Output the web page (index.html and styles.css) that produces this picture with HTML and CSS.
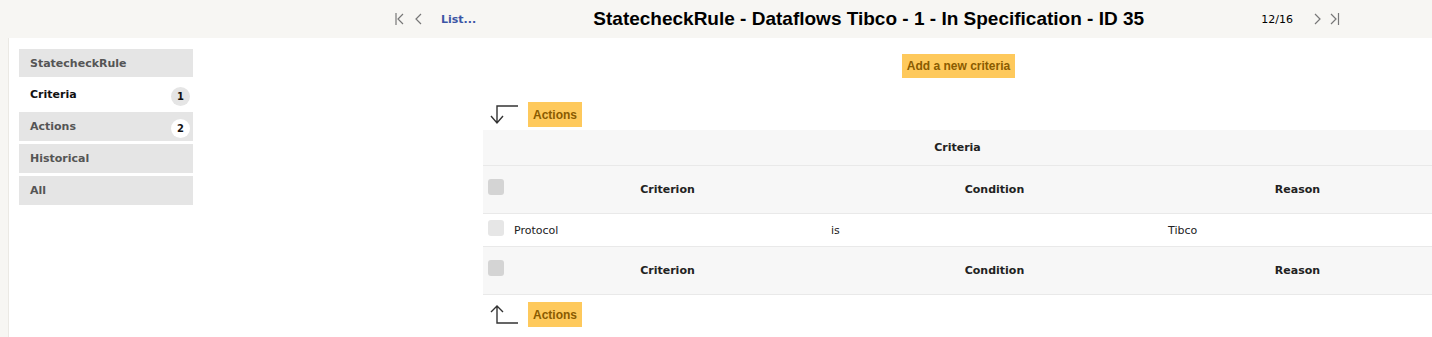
FILE: index.html
```html
<!DOCTYPE html>
<html lang="en">
<head>
    <meta charset="UTF-8">
    <title>StatecheckRule - Dataflows Tibco</title>
    <link rel="stylesheet" href="styles.css">
</head>
<body>

    <div class="topbar">
        <div class="nav-left">
            <svg class="nav-icon" width="12" height="14" viewBox="0 0 12 14"><path d="M2 1v12M9 2L4 7l5 5" fill="none" stroke="#777" stroke-width="1.2"/></svg>
            <svg class="nav-icon" width="10" height="14" viewBox="0 0 10 14"><path d="M7 2L2 7l5 5" fill="none" stroke="#777" stroke-width="1.2"/></svg>
            <a class="list-link" href="#">List...</a>
        </div>
        <h1 class="title">StatecheckRule - Dataflows Tibco - 1 - In Specification - ID 35</h1>
        <div class="nav-right">
            <span class="counter">12/16</span>
            <svg class="nav-icon" width="10" height="14" viewBox="0 0 10 14"><path d="M3 2l5 5-5 5" fill="none" stroke="#777" stroke-width="1.2"/></svg>
            <svg class="nav-icon" width="12" height="14" viewBox="0 0 12 14"><path d="M2 2l5 5-5 5M9.5 1v12" fill="none" stroke="#777" stroke-width="1.2"/></svg>
        </div>
    </div>

    <div class="page">
        <div class="gutter"></div>

        <ul class="sidebar">
            <li class="side-item first">StatecheckRule</li>
            <li class="side-item active">Criteria <span class="badge">1</span></li>
            <li class="side-item">Actions <span class="badge light">2</span></li>
            <li class="side-item">Historical</li>
            <li class="side-item">All</li>
        </ul>

        <div class="main">
            <div class="add-row">
                <button class="yellow-btn add-btn">Add a new criteria</button>
            </div>

            <div class="actions-row">
                <svg class="arrow" width="30" height="20" viewBox="0 0 30 20"><path d="M28 1H7v17M1 11l6 7 6-7" fill="none" stroke="#333" stroke-width="1.4"/></svg>
                <button class="yellow-btn">Actions</button>
            </div>

            <table class="criteria-table">
                <colgroup>
                    <col class="w-check">
                    <col class="w-criterion">
                    <col class="w-condition">
                    <col>
                </colgroup>
                <thead>
                    <tr class="caption-row">
                        <th colspan="4">Criteria</th>
                    </tr>
                    <tr class="head-row">
                        <th><span class="check"></span></th>
                        <th>Criterion</th>
                        <th>Condition</th>
                        <th>Reason</th>
                    </tr>
                </thead>
                <tbody>
                    <tr class="data-row">
                        <td><span class="check light"></span></td>
                        <td>Protocol</td>
                        <td>is</td>
                        <td>Tibco</td>
                    </tr>
                </tbody>
                <tfoot>
                    <tr class="head-row">
                        <th><span class="check"></span></th>
                        <th>Criterion</th>
                        <th>Condition</th>
                        <th>Reason</th>
                    </tr>
                </tfoot>
            </table>

            <div class="actions-row bottom">
                <svg class="arrow" width="30" height="20" viewBox="0 0 30 20"><path d="M28 18H7V1M1 7l6-6 6 6" fill="none" stroke="#333" stroke-width="1.4"/></svg>
                <button class="yellow-btn">Actions</button>
            </div>
        </div>
    </div>

</body>
</html>
```

FILE: styles.css
```css
body {
    margin: 0;
    font-family: 'DejaVu Sans', Verdana, sans-serif;
    font-size: 11px;
    color: #333;
    background-color: #ffffff;
}
.topbar {
    height: 38px;
    background-color: #f7f6f3;
    display: flex;
    align-items: center;
}
.nav-left {
    display: flex;
    align-items: center;
    margin-left: 394px;
    gap: 8px;
}
.nav-icon {
    display: block;
}
.list-link {
    margin-left: 9px;
    color: #3c55a5;
    font-weight: bold;
    font-size: 11px;
    text-decoration: none;
}
.title {
    flex: 1;
    margin: 0;
    text-align: center;
    font-family: 'Liberation Sans', Arial, sans-serif;
    font-size: 19px;
    font-weight: bold;
    color: #000;
}
.nav-right {
    display: flex;
    align-items: center;
    gap: 7px;
    margin-right: 91px;
}
.counter {
    color: #000;
    font-size: 11px;
    margin-right: 12px;
}
.page {
    display: flex;
    align-items: flex-start;
    min-height: 299px;
}
.gutter {
    width: 8px;
    align-self: stretch;
    background-color: #f7f6f3;
    border-right: 1px solid #ebe9e4;
}
.sidebar {
    list-style: none;
    margin: 11px 0 0 10px;
    padding: 0;
    width: 174px;
}
.side-item {
    height: 29px;
    margin-bottom: 3px;
    padding: 0 3px 0 11px;
    display: flex;
    align-items: center;
    justify-content: space-between;
    background-color: #e5e5e5;
    color: #555;
    font-weight: bold;
}
.side-item.first {
    height: 28px;
}
.side-item.active {
    background-color: #ffffff;
    color: #111;
}
.badge {
    width: 19px;
    height: 19px;
    border-radius: 50%;
    background-color: #e5e5e5;
    color: #111;
    font-size: 10px;
    display: flex;
    align-items: center;
    justify-content: center;
    margin-top: 4px;
}
.badge.light {
    background-color: #ffffff;
}
.main {
    width: 949px;
    margin-left: auto;
}
.add-row {
    display: flex;
    justify-content: center;
    padding-top: 16px;
    padding-left: 2px;
}
.yellow-btn {
    border: none;
    background-color: #fec95c;
    color: #8a5b00;
    font-family: 'Liberation Sans', Arial, sans-serif;
    font-size: 12px;
    font-weight: bold;
    height: 25px;
    padding: 0 5px;
}
.add-btn {
    height: 24px;
}
.actions-row {
    display: flex;
    align-items: center;
    gap: 8px;
    margin-top: 24px;
    padding-left: 7px;
    height: 25px;
    margin-bottom: 3px;
}
.actions-row.bottom {
    margin-top: 7px;
}
.criteria-table {
    width: 100%;
    border-collapse: collapse;
    table-layout: fixed;
}
.w-check {
    width: 26px;
}
.w-criterion {
    width: 317px;
}
.w-condition {
    width: 337px;
}
.criteria-table th,
.criteria-table td {
    border-bottom: 1px solid #e9e9e9;
    padding: 0 5px;
}
.criteria-table th {
    background-color: #f7f7f7;
    color: #222;
    font-weight: bold;
    text-align: center;
}
.caption-row th {
    height: 35px;
}
.head-row th {
    height: 47px;
}
.data-row td {
    height: 32px;
    text-align: left;
    color: #222;
}
.check {
    display: block;
    width: 16px;
    height: 16px;
    border-radius: 3px;
    background-color: #d4d4d4;
    margin-top: -6px;
}
.check.light {
    background-color: #e6e6e6;
    margin-top: -4px;
}
```
